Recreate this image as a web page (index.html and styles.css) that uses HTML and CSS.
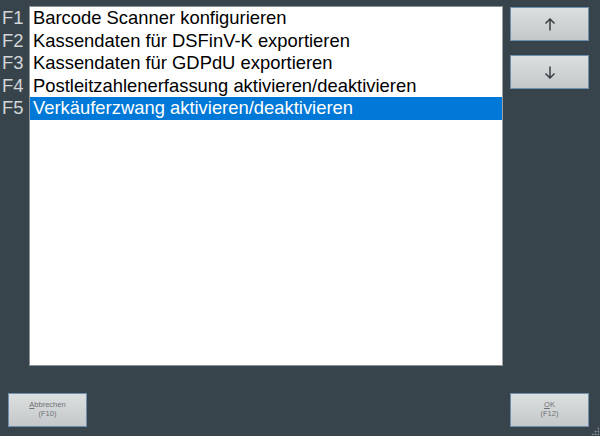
FILE: index.html
```html
<!DOCTYPE html>
<html lang="de">
  <head>
    <meta charset="utf-8" />
    <title>Funktionen</title>
    <link rel="stylesheet" href="styles.css">
  </head>
  <body>
    <div class="dialog">
      <div class="main">
        <ul class="keys">
          <li>F1</li>
          <li>F2</li>
          <li>F3</li>
          <li>F4</li>
          <li>F5</li>
        </ul>

        <ul class="listbox">
          <li>Barcode Scanner konfigurieren</li>
          <li>Kassendaten für DSFinV-K exportieren</li>
          <li>Kassendaten für GDPdU exportieren</li>
          <li>Postleitzahlenerfassung aktivieren/deaktivieren</li>
          <li class="selected">Verkäuferzwang aktivieren/deaktivieren</li>
        </ul>

        <div class="side">
          <button type="button" class="btn arrow" title="Nach oben">
            <svg width="12" height="13" viewBox="0 0 12 13"><path d="M6 12.5V1M1.5 5.5L6 1l4.5 4.5" fill="none" stroke="#3a3f44" stroke-width="1.5"/></svg>
          </button>
          <button type="button" class="btn arrow" title="Nach unten">
            <svg width="12" height="13" viewBox="0 0 12 13"><path d="M6 0.5V12M1.5 7.5L6 12l4.5-4.5" fill="none" stroke="#3a3f44" stroke-width="1.5"/></svg>
          </button>
        </div>
      </div>

      <div class="footer">
        <button type="button" class="btn small"><u>A</u>bbrechen<br>(F10)</button>
        <button type="button" class="btn small"><u>O</u>K<br>(F12)</button>
      </div>
    </div>
    <div class="grip"></div>
  </body>
</html>
```

FILE: styles.css
```css
* {
  margin: 0;
  padding: 0;
  box-sizing: border-box;
}

html, body {
  height: 100%;
}

body {
  background: #37444c;
  font-family: "Liberation Sans", Arial, sans-serif;
  overflow: hidden;
  position: relative;
}

.dialog {
  display: flex;
  flex-direction: column;
  height: 100%;
}

.main {
  display: flex;
  padding-top: 6px;
}

ul {
  list-style: none;
}

.keys {
  width: 29px;
  padding-top: 1px;
}

.keys li {
  height: 22.5px;
  line-height: 22.5px;
  font-size: 18.4px;
  color: #d2d6d8;
  padding-left: 2px;
}

.listbox {
  width: 474px;
  height: 360px;
  background: #ffffff;
  border: 1px solid #8c9296;
  border-right-color: #9aa0a4;
}

.listbox li {
  height: 22.5px;
  line-height: 22.5px;
  font-size: 18.4px;
  color: #000000;
  padding-left: 3px;
  white-space: nowrap;
}

.listbox li.selected {
  background: #0078d7;
  color: #ffffff;
}

.side {
  display: flex;
  flex-direction: column;
  gap: 14px;
  margin-left: 7px;
  padding-top: 1px;
}

.btn {
  width: 79px;
  height: 34px;
  border: 1px solid #6f8fae;
  background: linear-gradient(#dcdfdf, #c4c8ca);
  color: #3a3f44;
  cursor: pointer;
}

.arrow {
  display: flex;
  align-items: center;
  justify-content: center;
}

.arrow svg {
  display: block;
}

.footer {
  display: flex;
  justify-content: space-between;
  padding: 27px 11px 0 8px;
}

.small {
  font-family: "Liberation Sans", Arial, sans-serif;
  font-size: 7.5px;
  line-height: 9px;
  color: #6e7276;
  padding-bottom: 2px;
}

.grip {
  position: absolute;
  right: 1px;
  bottom: 1px;
  width: 8px;
  height: 8px;
  background:
    radial-gradient(circle, #8a9498 0.8px, transparent 1.2px) 0 0 / 3px 3px;
  clip-path: polygon(100% 0, 100% 100%, 0 100%);
}
```
